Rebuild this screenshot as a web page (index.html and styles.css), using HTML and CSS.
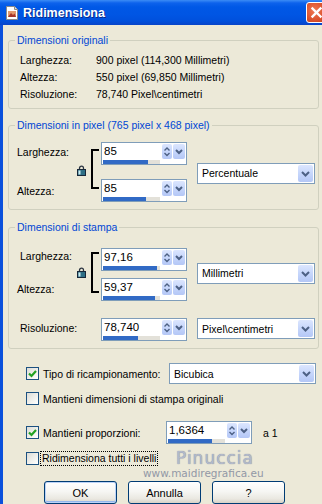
FILE: index.html
```html
<!DOCTYPE html>
<html lang="it">
<head>
<meta charset="utf-8">
<title>Ridimensiona</title>
<link rel="stylesheet" href="styles.css">
</head>
<body>
<div class="window">
  <header class="titlebar">
    <svg class="app-icon" viewBox="0 0 14 14" width="14" height="14"><path d="M1.5 0.5h8l3 3v10h-11z" fill="#fff" stroke="#8a8a8a"/><path d="M9.5 0.5v3h3" fill="#ddd" stroke="#8a8a8a"/><rect x="3" y="5" width="8" height="6" fill="#E39A6E"/><path d="M3 11l3-4 2 2 1.5-1.5 1.5 3.5z" fill="#A8362A"/></svg>
    <span class="title">Ridimensiona</span>
    <span class="close"><svg viewBox="0 0 21 21" width="21" height="21"><path d="M6.5 6.5l8 8M14.5 6.5l-8 8" stroke="#fff" stroke-width="2.4" stroke-linecap="square"/></svg></span>
  </header>

  <main class="client">
    <section class="group g1">
      <div class="caption">Dimensioni originali</div>
      <div class="info">
        <span>Larghezza:</span><span>900 pixel (114,300 Millimetri)</span>
        <span>Altezza:</span><span>550 pixel (69,850 Millimetri)</span>
        <span>Risoluzione:</span><span>78,740 Pixel\centimetri</span>
      </div>
    </section>

    <section class="group g2">
      <div class="caption">Dimensioni in pixel (765 pixel x 468 pixel)</div>
      <div class="linked">
        <span class="lbl lbl-w">Larghezza:</span>
        <span class="lbl lbl-h">Altezza:</span>
        <svg class="lock" viewBox="0 0 9 11" width="9" height="11"><path d="M2.5 5V3.2a2 2 0 0 1 4 0V5" fill="none" stroke="#2b3440" stroke-width="1.3"/><rect x="0.5" y="4.5" width="8" height="6" fill="#2E6F86" stroke="#17283a"/><rect x="1.5" y="5.5" width="2" height="4" fill="#CDEBF0"/></svg>
        <span class="bracket"></span>
        <div class="spin sp-top">
          <div class="spin-main"><span class="spin-val">85</span><span class="track"><span class="fill" style="width:79%"></span></span></div>
          <div class="spin-btns"><span class="ud"><svg viewBox="0 0 10 15" width="10" height="15"><path d="M2.5 6.5L5 4l2.5 2.5M2.5 9L5 11.5 7.5 9" fill="none" stroke="#4D6185" stroke-width="1.4"/></svg></span><span class="dd"><svg viewBox="0 0 12 15" width="12" height="15"><path d="M3 6l3 3 3-3" fill="none" stroke="#4D6185" stroke-width="2"/></svg></span></div>
        </div>
        <div class="spin sp-bot">
          <div class="spin-main"><span class="spin-val">85</span><span class="track"><span class="fill" style="width:75%"></span></span></div>
          <div class="spin-btns"><span class="ud"><svg viewBox="0 0 10 15" width="10" height="15"><path d="M2.5 6.5L5 4l2.5 2.5M2.5 9L5 11.5 7.5 9" fill="none" stroke="#4D6185" stroke-width="1.4"/></svg></span><span class="dd"><svg viewBox="0 0 12 15" width="12" height="15"><path d="M3 6l3 3 3-3" fill="none" stroke="#4D6185" stroke-width="2"/></svg></span></div>
        </div>
        <div class="select sel-unit">
          <span class="sel-text">Percentuale</span>
          <span class="sel-btn"><svg viewBox="0 0 15 17" width="15" height="17"><path d="M4 7l3.5 3.5L11 7" fill="none" stroke="#4D6185" stroke-width="2"/></svg></span>
        </div>
      </div>
    </section>

    <section class="group g3">
      <div class="caption">Dimensioni di stampa</div>
      <div class="linked">
        <span class="lbl lbl-w">Larghezza:</span>
        <span class="lbl lbl-h">Altezza:</span>
        <svg class="lock" viewBox="0 0 9 11" width="9" height="11"><path d="M2.5 5V3.2a2 2 0 0 1 4 0V5" fill="none" stroke="#2b3440" stroke-width="1.3"/><rect x="0.5" y="4.5" width="8" height="6" fill="#2E6F86" stroke="#17283a"/><rect x="1.5" y="5.5" width="2" height="4" fill="#CDEBF0"/></svg>
        <span class="bracket"></span>
        <div class="spin sp-top">
          <div class="spin-main"><span class="spin-val">97,16</span><span class="track"><span class="fill" style="width:95%"></span></span></div>
          <div class="spin-btns"><span class="ud"><svg viewBox="0 0 10 15" width="10" height="15"><path d="M2.5 6.5L5 4l2.5 2.5M2.5 9L5 11.5 7.5 9" fill="none" stroke="#4D6185" stroke-width="1.4"/></svg></span><span class="dd"><svg viewBox="0 0 12 15" width="12" height="15"><path d="M3 6l3 3 3-3" fill="none" stroke="#4D6185" stroke-width="2"/></svg></span></div>
        </div>
        <div class="spin sp-bot">
          <div class="spin-main"><span class="spin-val">59,37</span><span class="track"><span class="fill" style="width:91%"></span></span></div>
          <div class="spin-btns"><span class="ud"><svg viewBox="0 0 10 15" width="10" height="15"><path d="M2.5 6.5L5 4l2.5 2.5M2.5 9L5 11.5 7.5 9" fill="none" stroke="#4D6185" stroke-width="1.4"/></svg></span><span class="dd"><svg viewBox="0 0 12 15" width="12" height="15"><path d="M3 6l3 3 3-3" fill="none" stroke="#4D6185" stroke-width="2"/></svg></span></div>
        </div>
        <div class="select sel-unit">
          <span class="sel-text">Millimetri</span>
          <span class="sel-btn"><svg viewBox="0 0 15 17" width="15" height="17"><path d="M4 7l3.5 3.5L11 7" fill="none" stroke="#4D6185" stroke-width="2"/></svg></span>
        </div>
      </div>
      <div class="res-row">
        <span class="lbl lbl-res">Risoluzione:</span>
        <div class="spin">
          <div class="spin-main"><span class="spin-val">78,740</span><span class="track"><span class="fill" style="width:61%"></span></span></div>
          <div class="spin-btns"><span class="ud"><svg viewBox="0 0 10 15" width="10" height="15"><path d="M2.5 6.5L5 4l2.5 2.5M2.5 9L5 11.5 7.5 9" fill="none" stroke="#4D6185" stroke-width="1.4"/></svg></span><span class="dd"><svg viewBox="0 0 12 15" width="12" height="15"><path d="M3 6l3 3 3-3" fill="none" stroke="#4D6185" stroke-width="2"/></svg></span></div>
        </div>
        <div class="select sel-res">
          <span class="sel-text">Pixel\centimetri</span>
          <span class="sel-btn"><svg viewBox="0 0 15 17" width="15" height="17"><path d="M4 7l3.5 3.5L11 7" fill="none" stroke="#4D6185" stroke-width="2"/></svg></span>
        </div>
      </div>
    </section>

    <div class="opt opt-resample">
      <label class="check-wrap cw-wide"><span class="cb"><svg viewBox="0 0 11 11" width="11" height="11"><path d="M2 5.5l2.5 2.5L9 3" fill="none" stroke="#21A121" stroke-width="2.2"/></svg></span><span>Tipo di ricampionamento:</span></label>
      <div class="select sel-wide">
        <span class="sel-text">Bicubica</span>
        <span class="sel-btn"><svg viewBox="0 0 15 17" width="15" height="17"><path d="M4 7l3.5 3.5L11 7" fill="none" stroke="#4D6185" stroke-width="2"/></svg></span>
      </div>
    </div>

    <div class="opt opt-print">
      <label class="check-wrap"><span class="cb"></span><span>Mantieni dimensioni di stampa originali</span></label>
    </div>

    <div class="opt opt-ratio">
      <label class="check-wrap cw-ratio"><span class="cb"><svg viewBox="0 0 11 11" width="11" height="11"><path d="M2 5.5l2.5 2.5L9 3" fill="none" stroke="#21A121" stroke-width="2.2"/></svg></span><span>Mantieni proporzioni:</span></label>
      <div class="spin">
        <div class="spin-main"><span class="spin-val">1,6364</span><span class="track"><span class="fill" style="width:77%"></span></span></div>
        <div class="spin-btns"><span class="ud"><svg viewBox="0 0 10 15" width="10" height="15"><path d="M2.5 6.5L5 4l2.5 2.5M2.5 9L5 11.5 7.5 9" fill="none" stroke="#4D6185" stroke-width="1.4"/></svg></span><span class="dd"><svg viewBox="0 0 12 15" width="12" height="15"><path d="M3 6l3 3 3-3" fill="none" stroke="#4D6185" stroke-width="2"/></svg></span></div>
      </div>
      <span class="ratio-suffix">a 1</span>
    </div>

    <div class="opt opt-layers">
      <label class="check-wrap"><span class="cb"></span><span class="focus">Ridimensiona tutti i livelli</span></label>
    </div>

    <div class="buttons">
      <span class="btn btn-default">OK</span>
      <span class="btn">Annulla</span>
      <span class="btn">?</span>
    </div>

    <div class="wm-name">Pinuccia</div>
    <div class="wm-url">www.maidiregrafica.eu</div>
  </main>
</div>
</body>
</html>
```

FILE: styles.css
```css
html, body {
  margin: 0;
  padding: 0;
}

body {
  width: 322px;
  height: 504px;
  overflow: hidden;
  background: #ECE9D8;
  font-family: "Liberation Sans", Arial, sans-serif;
  font-size: 10.5px;
  color: #000;
}

.window {
  display: flex;
  flex-direction: column;
  height: 504px;
}

/* ---------- title bar ---------- */
.titlebar {
  flex: none;
  height: 25px;
  display: flex;
  align-items: center;
  padding-left: 5px;
  overflow: hidden;
  background: linear-gradient(to bottom, #3B8CF5 0, #0D62EC 3px, #0058E6 7px, #0055E3 15px, #0050DC 21px, #0844C8 25px);
}

.app-icon {
  flex: none;
  margin-right: 4px;
}

.title {
  flex: 1;
  color: #fff;
  font-weight: bold;
  font-size: 12.5px;
  text-shadow: 1px 1px 0 #0A2A8A;
}

.close {
  flex: none;
  box-sizing: border-box;
  width: 21px;
  height: 21px;
  margin-right: -5px;
  border: 1px solid #fff;
  border-radius: 3px;
  background: radial-gradient(circle at 40% 40%, #EE7A55 0, #DD5530 55%, #C13A15 100%);
  display: flex;
  align-items: center;
  justify-content: center;
}

.close svg {
  margin: -1px;
}

/* ---------- client ---------- */
.client {
  flex: 1;
  position: relative;
  border-left: 3px solid #0A50DC;
  padding: 15px 3px 0 5px;
  background: #ECE9D8;
}

.group {
  border: 1px solid #D0D0BF;
  border-radius: 3px;
  padding: 0 3px 7px 0;
}

.caption {
  width: max-content;
  margin: -8px 0 0 6px;
  padding: 0 2px;
  line-height: 14px;
  background: #ECE9D8;
  color: #0046D5;
}

.g1 {
  padding-bottom: 0;
}

.g2 {
  margin-top: 16px;
}

.g3 {
  margin-top: 17px;
}

.info {
  display: grid;
  grid-template-columns: 76px auto;
  line-height: 17px;
  padding: 5px 0 5px 11px;
}

/* linked width/height block */
.linked {
  display: grid;
  grid-template-columns: 60px 14px 10px 86px 1fr;
  grid-template-rows: 23px 23px;
  row-gap: 14px;
  padding: 10px 0 0 8px;
}

.g3 .linked {
  row-gap: 7px;
  padding-top: 14px;
}

.lbl {
  line-height: 13px;
  white-space: nowrap;
}

.lbl-w {
  grid-row: 1;
  grid-column: 1;
  align-self: center;
  margin-bottom: 3px;
}

.lbl-h {
  grid-row: 2;
  grid-column: 1;
  align-self: center;
  margin-top: 1px;
}

.g3 .lbl-w {
  margin-bottom: 7px;
  padding-left: 3px;
}

.g3 .lbl-h {
  margin-top: 0;
}

.lock {
  grid-row: 1 / 3;
  grid-column: 2;
  align-self: center;
  margin-bottom: 4px;
}

.g3 .lock {
  margin-bottom: 5px;
}

.bracket {
  grid-row: 1 / 3;
  grid-column: 3;
  align-self: start;
  box-sizing: border-box;
  width: 8px;
  height: 40px;
  margin-top: 7px;
  border: 2px solid #000;
  border-right: none;
}

.g3 .bracket {
  height: 41px;
  margin-top: 4px;
}

.sp-top {
  grid-row: 1;
  grid-column: 4;
}

.sp-bot {
  grid-row: 2;
  grid-column: 4;
}

.sel-unit {
  grid-row: 1 / 3;
  grid-column: 5;
  align-self: center;
  margin: 2px 0 0 10px;
}

.g3 .sel-unit {
  margin: 0 0 3px 10px;
}

.res-row {
  display: grid;
  grid-template-columns: 84px 86px 1fr;
  align-items: start;
  margin-top: 17px;
  padding-left: 8px;
}

.lbl-res {
  padding-left: 3px;
  margin-top: 4px;
}

.sel-res {
  margin-left: 10px;
}

/* ---------- spin box ---------- */
.spin {
  box-sizing: border-box;
  width: 86px;
  height: 23px;
  border: 1px solid #7F9DB9;
  background: #fff;
  display: flex;
}

.spin-main {
  flex: 1;
  min-width: 0;
  display: flex;
  flex-direction: column;
  padding-left: 1px;
}

.spin-val {
  display: block;
  height: 17px;
  line-height: 17px;
  font-size: 11.5px;
  padding-left: 1px;
}

.track {
  display: block;
  height: 4px;
  background: #E3E1D9;
}

.fill {
  display: block;
  height: 100%;
  background: #316AC5;
}

.spin-btns {
  display: flex;
  align-items: flex-start;
  gap: 1px;
  padding: 1px 1px 0 2px;
}

.ud, .dd, .sel-btn {
  display: flex;
  border-radius: 2px;
  background: linear-gradient(to bottom, #DCE6FE 0, #C6D6FB 50%, #B4C7F6 100%);
}

.ud {
  width: 10px;
  height: 15px;
}

.dd {
  width: 12px;
  height: 15px;
}

/* ---------- select ---------- */
.select {
  box-sizing: border-box;
  height: 21px;
  border: 1px solid #7F9DB9;
  background: #fff;
  display: flex;
  align-items: center;
  padding: 1px;
}

.sel-text {
  flex: 1;
  padding-left: 3px;
  white-space: nowrap;
}

.sel-btn {
  width: 15px;
  height: 17px;
}

.sel-wide {
  width: 147px;
}

/* ---------- options ---------- */
.opt {
  display: flex;
  align-items: center;
  padding-left: 18px;
}

.opt-resample {
  margin-top: 14px;
}

.opt-print {
  margin-top: 8px;
  height: 13px;
}

.opt-ratio {
  margin-top: 16px;
}

.opt-layers {
  margin-top: 8px;
  height: 13px;
}

.check-wrap {
  display: flex;
  align-items: center;
  gap: 4px;
  white-space: nowrap;
}

.cw-wide {
  width: 143px;
}

.cw-ratio {
  width: 140px;
}

.cb {
  flex: none;
  box-sizing: border-box;
  width: 13px;
  height: 13px;
  border: 1px solid #1C5180;
  background: linear-gradient(135deg, #DCDCD7 0, #F2F2EE 60%, #FFFFFF 100%);
  display: flex;
  align-items: center;
  justify-content: center;
}

.focus {
  outline: 1px dotted #000;
  padding: 0 1px;
  margin-left: -2px;
  line-height: 13px;
}

.ratio-suffix {
  margin-left: 11px;
}

/* ---------- buttons ---------- */
.buttons {
  display: flex;
  gap: 11px;
  margin-top: 16px;
  padding-left: 36px;
}

.btn {
  box-sizing: border-box;
  width: 73px;
  height: 23px;
  border: 1px solid #003C74;
  border-radius: 3px;
  background: linear-gradient(to bottom, #FFFFFF 0, #F6F6F3 45%, #EAE8E1 80%, #D8D2C6 100%);
  display: flex;
  align-items: center;
  justify-content: center;
  font-size: 11px;
}

.btn-default {
  box-shadow: inset 0 0 0 1px #BCD3F7, inset 0 -1px 0 1px #94B6EC;
}

/* ---------- watermark ---------- */
.wm-name {
  position: absolute;
  left: 173px;
  top: 423px;
  font-family: "DejaVu Sans", sans-serif;
  font-size: 17px;
  letter-spacing: 1px;
  color: #B3BACB;
  text-shadow: 0 0 1px #6F7A93;
}

.wm-url {
  position: absolute;
  left: 140px;
  top: 442px;
  font-family: "DejaVu Sans", sans-serif;
  font-size: 10.5px;
  line-height: 12px;
  color: #9298A6;
}
```
